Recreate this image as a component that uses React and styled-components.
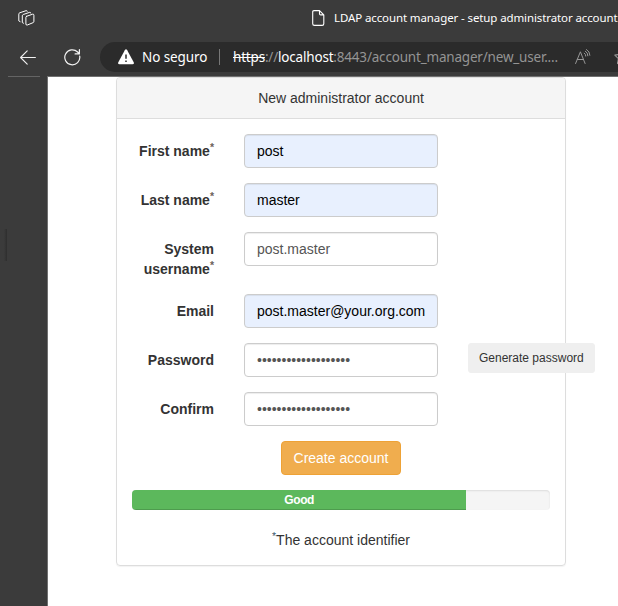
import React from "react";
import styled, { createGlobalStyle } from "styled-components";

const GlobalStyle = createGlobalStyle`
  *, *::before, *::after { box-sizing: border-box; }
  html, body, #root { height: 100%; margin: 0; }
  body { overflow: hidden; background: #3b3b3b; }
  svg { flex: none; }
`;

const Window = styled.div`
  display: flex;
  flex-direction: column;
  width: 618px;
  height: 606px;
  overflow: hidden;
  background: #3b3b3b;
  font-family: "Liberation Sans", Arial, sans-serif;
`;

const TitleBar = styled.header`
  display: flex;
  align-items: center;
  flex: 0 0 42px;
  height: 42px;
  padding: 0 0 6px 18px;
  color: #fff;
`;

const TabTitle = styled.div`
  display: flex;
  align-items: center;
  flex: none;
  gap: 9px;
  margin-left: 277px;
  font: 11.5px/16px "Noto Sans", "Open Sans", sans-serif;
  letter-spacing: -0.11px;
  white-space: nowrap;
`;

const Toolbar = styled.nav`
  display: flex;
  flex: 0 0 34px;
  height: 34px;
  padding-left: 20px;
  color: #f2f2f2;
`;

const ToolIcon = styled.span`
  display: flex;
  align-items: center;
  flex: 0 0 ${(p) => p.$width}px;
  height: 30px;
`;

const AddressBar = styled.div`
  display: flex;
  align-items: center;
  flex: 0 0 530px;
  height: 30px;
  padding-left: 18px;
  border-radius: 15px 0 0 15px;
  background: #2b2b2b;
  color: #fff;
  font: 13.5px/20px "Noto Sans", "Open Sans", sans-serif;
  white-space: nowrap;
`;

const Security = styled.span`
  flex: 0 0 69px;
  margin-left: 8px;
  letter-spacing: -0.1px;
`;

const Divider = styled.i`
  flex: none;
  width: 1px;
  height: 16px;
  margin: 0 13px 0 8px;
  background: #777;
`;

const Url = styled.span`
  flex: 0 0 328px;
  color: #949494;
  letter-spacing: -0.19px;
  s, b { color: #fff; font-weight: 400; }
`;

const AddressIcons = styled.span`
  display: flex;
  align-items: center;
  gap: 23px;
  margin-left: 14px;
  color: #969696;
`;

const Main = styled.div`
  display: flex;
  flex: 1;
  min-height: 0;
`;

const Sidebar = styled.aside`
  display: flex;
  flex-direction: column;
  justify-content: space-between;
  flex: 0 0 47px;
  background: #3b3b3b;
`;

const SidebarRule = styled.i`
  height: 1px;
  margin-left: 8px;
  width: 32px;
  background: #646464;
`;

const SidebarHandle = styled.i`
  width: 3px;
  height: 32px;
  margin: 0 0 345px 4px;
  background: linear-gradient(90deg, #3b3b3b, #2e2e2e);
`;

const Page = styled.main`
  flex: 1;
  border: solid #707070;
  border-width: 1px 0 0 1px;
  background: #fff;
`;

const Panel = styled.section`
  width: 450px;
  height: 489px;
  margin-left: 68px;
  border: 1px solid #ddd;
  border-radius: 4px;
  box-shadow: 0 1px 1px rgba(0, 0, 0, 0.05);
  color: #333;
  font-size: 14px;
  line-height: 20px;
`;

const PanelHeading = styled.div`
  height: 41px;
  padding: 10px 15px;
  border-bottom: 1px solid #ddd;
  border-radius: 3px 3px 0 0;
  background: #f5f5f5;
  text-align: center;
`;

const Form = styled.form`
  display: flex;
  flex-direction: column;
  align-items: center;
  padding-top: 15px;
`;

const Row = styled.div`
  display: grid;
  grid-template-columns: 97px 194px max-content;
  column-gap: 30px;
  align-items: start;
  align-self: flex-start;
  min-height: 34px;
  margin-bottom: 15px;
`;

const Label = styled.label`
  padding-top: 7px;
  font-weight: 700;
  text-align: right;
`;

const Sup = styled.sup`
  position: relative;
  top: -0.5em;
  color: ${(p) => p.$color};
  font-size: 75%;
  line-height: 0;
  vertical-align: baseline;
`;

const Input = styled.input`
  width: 194px;
  height: 34px;
  padding: 6px 12px;
  border: 1px solid #ccc;
  border-radius: 4px;
  outline: 0;
  background: ${(p) => (p.$filled ? "#e8f0fe" : "#fff")};
  box-shadow: inset 0 1px 1px rgba(0, 0, 0, 0.075);
  color: ${(p) => (p.$filled ? "#000" : "#555")};
  font: 14px/20px "Liberation Sans", Arial, sans-serif;
`;

const Button = styled.button`
  height: 34px;
  padding: 6px 11.5px;
  border: 1px solid #eea236;
  border-radius: 4px;
  background: #f0ad4e;
  color: #fff;
  font: 14px/20px "Liberation Sans", Arial, sans-serif;
`;

const SmallButton = styled(Button)`
  height: 30px;
  padding: 5px 10px;
  border-color: #efefef;
  border-radius: 3px;
  background: #efefef;
  color: #333;
  font-size: 12px;
  line-height: 18px;
`;

const Progress = styled.div`
  width: 418px;
  height: 20px;
  margin: 15px 0 20px;
  overflow: hidden;
  border-radius: 4px;
  background: #f5f5f5;
  box-shadow: inset 0 1px 2px rgba(0, 0, 0, 0.1);
`;

const ProgressBar = styled.div`
  width: 80%;
  height: 20px;
  background: #5cb85c;
  box-shadow: inset 0 -1px 0 rgba(0, 0, 0, 0.15);
  color: #fff;
  font-size: 12px;
  font-weight: 700;
  letter-spacing: -0.4px;
  text-align: center;
`;

const Note = styled.p`
  margin: 0;
`;

const line = { fill: "none", stroke: "currentColor", strokeLinecap: "round", strokeLinejoin: "round" };

const WorkspacesIcon = () => (
  <svg width="17" height="18" viewBox="0 0 17 18" {...line} strokeWidth="1">
    <path d="M8.6 7.3 14.6 5.2q1.3-.3 1.3 1v6.2q0 .9-.9 1.3l-5.7 2.3q-1.4.4-1.4-1V8.3q0-.7.7-1Z" />
    <path d="M5.5 14.2 4.3 13.6V6.8q0-.9.9-1.3l6.6-2.2q.8-.2.9.7" />
    <path d="M2.1 12.6.8 11.9V5.1q0-.9.9-1.3L8.3 1.6q.8-.2.9.7" />
  </svg>
);

const FileIcon = () => (
  <svg width="13" height="16" viewBox="0 0 13 16" {...line} strokeWidth="1.1">
    <path d="M2 .6h5.5l4.3 4.3v8.8q0 1.7-1.7 1.7H2.4Q.7 15.4.7 13.7V2Q.7.6 2 .6ZM7.5.6v3.2q0 1.1 1.1 1.1h3.2" />
  </svg>
);

const BackIcon = () => (
  <svg width="16" height="15" viewBox="0 0 16 15" {...line} strokeWidth="1.1">
    <path d="M15.4 7.5H.6M7.2.9.6 7.5l6.6 6.6" />
  </svg>
);

const ReloadIcon = () => (
  <svg width="17" height="17" viewBox="0 0 17 17" {...line} strokeWidth="1.2">
    <path d="M15.7 7.1A7.5 7.5 0 1 1 13.6 3L15 4.5M15.4.7v4.2h-4.3" />
  </svg>
);

const WarningIcon = () => (
  <svg width="16" height="16" viewBox="0 0 16 16">
    <path d="M6.8 1.2q1.2-1.8 2.4 0l6.5 12q.8 2-1.2 2h-13q-2 0-1.2-2Z" fill="#fff" />
    <path d="M8 5.4v4.3M8 11.6v1.4" stroke="#2b2b2b" strokeWidth="1.5" />
  </svg>
);

const ReadAloudIcon = () => (
  <svg width="16" height="16" viewBox="0 0 16 16" {...line} strokeWidth="1">
    <path d="M.6 14.5 5.4 2.8l4.7 11.7M2.3 10.5h6.2" />
    <path d="M9.3 4.1q1.6 1 1.5 3M10.4 2.2q2.6 1.5 2.5 4.6M11.5.5q3.4 1.9 3.4 5.8" />
  </svg>
);

const StarIcon = () => (
  <svg width="16" height="16" viewBox="0 0 16 16" {...line} strokeWidth="1.1">
    <path d="m8 .8 2.2 4.6 5 .7-3.6 3.5.9 5L8 12.2l-4.5 2.4.9-5L.8 6.1l5-.7Z" />
  </svg>
);

const fields = [
  { label: "First name", required: true, value: "post", filled: true },
  { label: "Last name", required: true, value: "master", filled: true },
  { label: "System username", required: true, value: "post.master" },
  { label: "Email", value: "post.master@your.org.com", filled: true },
  { label: "Password", value: "•".repeat(19), action: "Generate password" },
  { label: "Confirm", value: "•".repeat(19) },
];

export default function App() {
  return (
    <Window>
      <GlobalStyle />
      <TitleBar>
        <WorkspacesIcon />
        <TabTitle>
          <FileIcon />
          LDAP account manager - setup administrator account
        </TabTitle>
      </TitleBar>
      <Toolbar>
        <ToolIcon $width={44}><BackIcon /></ToolIcon>
        <ToolIcon $width={36}><ReloadIcon /></ToolIcon>
        <AddressBar>
          <WarningIcon />
          <Security>No seguro</Security>
          <Divider />
          <Url><s>https</s>://<b>localhost</b>:8443/account_manager/new_user....</Url>
          <AddressIcons>
            <ReadAloudIcon />
            <StarIcon />
          </AddressIcons>
        </AddressBar>
      </Toolbar>
      <Main>
        <Sidebar>
          <SidebarRule />
          <SidebarHandle />
        </Sidebar>
        <Page>
          <Panel>
            <PanelHeading>New administrator account</PanelHeading>
            <Form>
              {fields.map((f) => (
                <Row key={f.label}>
                  <Label>
                    {f.label}
                    {f.required && <Sup $color="#6b625a">*</Sup>}
                  </Label>
                  <Input $filled={f.filled} value={f.value} readOnly />
                  {f.action && <SmallButton type="button">{f.action}</SmallButton>}
                </Row>
              ))}
              <Button type="button">Create account</Button>
              <Progress>
                <ProgressBar>Good</ProgressBar>
              </Progress>
              <Note><Sup $color="#3b5a70">*</Sup>The account identifier</Note>
            </Form>
          </Panel>
        </Page>
      </Main>
    </Window>
  );
}
